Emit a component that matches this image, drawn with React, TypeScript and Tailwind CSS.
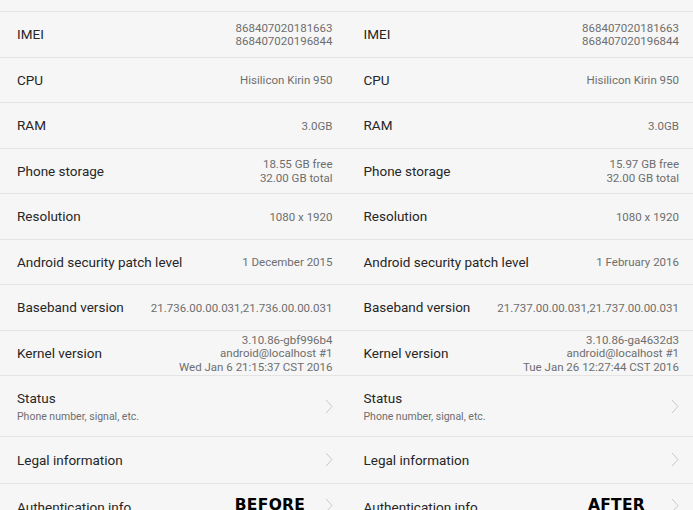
import React from "react";

type Row = { label: string; value?: string[] };

const rowsBefore: Row[] = [
  { label: "IMEI", value: ["868407020181663", "868407020196844"] },
  { label: "CPU", value: ["Hisilicon Kirin 950"] },
  { label: "RAM", value: ["3.0GB"] },
  { label: "Phone storage", value: ["18.55 GB free", "32.00 GB total"] },
  { label: "Resolution", value: ["1080 x 1920"] },
  { label: "Android security patch level", value: ["1 December 2015"] },
  { label: "Baseband version", value: ["21.736.00.00.031,21.736.00.00.031"] },
  {
    label: "Kernel version",
    value: ["3.10.86-gbf996b4", "android@localhost #1", "Wed Jan 6 21:15:37 CST 2016"],
  },
];

const rowsAfter: Row[] = [
  { label: "IMEI", value: ["868407020181663", "868407020196844"] },
  { label: "CPU", value: ["Hisilicon Kirin 950"] },
  { label: "RAM", value: ["3.0GB"] },
  { label: "Phone storage", value: ["15.97 GB free", "32.00 GB total"] },
  { label: "Resolution", value: ["1080 x 1920"] },
  { label: "Android security patch level", value: ["1 February 2016"] },
  { label: "Baseband version", value: ["21.737.00.00.031,21.737.00.00.031"] },
  {
    label: "Kernel version",
    value: ["3.10.86-ga4632d3", "android@localhost #1", "Tue Jan 26 12:27:44 CST 2016"],
  },
];

function Chevron() {
  return (
    <svg width="8" height="15" viewBox="0 0 8 15" className="shrink-0">
      <path d="M1 1 L7 7.5 L1 14" fill="none" stroke="#c8c8c8" strokeWidth="1" />
    </svg>
  );
}

function Column({ rows, tag }: { rows: Row[]; tag: string }) {
  return (
    <div className="relative flex flex-col">
      <div className="h-[12px] border-b border-[#e4e4e4]" />
      {rows.map((r) => (
        <div
          key={r.label}
          className="h-[45.5px] border-b border-[#e4e4e4] flex items-center justify-between pl-[17px] pr-[14px]"
        >
          <span className="text-[13.5px] text-[#262626]">{r.label}</span>
          <div className="flex flex-col items-end pt-[2px] text-[11.5px] leading-[13.5px] text-[#6e6e6e]">
            {r.value?.map((v) => (
              <span key={v}>{v}</span>
            ))}
          </div>
        </div>
      ))}
      <div className="h-[61px] border-b border-[#e4e4e4] flex items-center justify-between pl-[17px] pr-[14px]">
        <div className="flex flex-col pt-[3px]">
          <span className="text-[13.5px] leading-[18px] text-[#262626]">Status</span>
          <span className="text-[10.5px] leading-[19px] text-[#6e6e6e]">Phone number, signal, etc.</span>
        </div>
        <Chevron />
      </div>
      <div className="h-[46.5px] border-b border-[#e4e4e4] flex items-center justify-between pl-[17px] pr-[14px]">
        <span className="text-[13.5px] text-[#262626]">Legal information</span>
        <Chevron />
      </div>
      <div className="relative h-[46px] flex items-start justify-between pl-[17px] pr-[14px] pt-[13px]">
        <span className="text-[13.5px] text-[#262626]">Authentication info</span>
        <div className="pt-[1px]">
          <Chevron />
        </div>
        <span
          className="absolute left-[270px] top-[10px] -translate-x-1/2 text-[15.5px] font-bold tracking-[0.3px] text-black"
          style={{ fontFamily: '"DejaVu Sans", sans-serif' }}
        >
          {tag}
        </span>
      </div>
    </div>
  );
}

export default function App() {
  return (
    <div
      className="w-[693px] h-[510px] overflow-hidden bg-[#f6f6f6] grid grid-cols-2"
      style={{ fontFamily: "Roboto, 'Noto Sans', sans-serif" }}
    >
      <Column rows={rowsBefore} tag="BEFORE" />
      <Column rows={rowsAfter} tag="AFTER" />
    </div>
  );
}
